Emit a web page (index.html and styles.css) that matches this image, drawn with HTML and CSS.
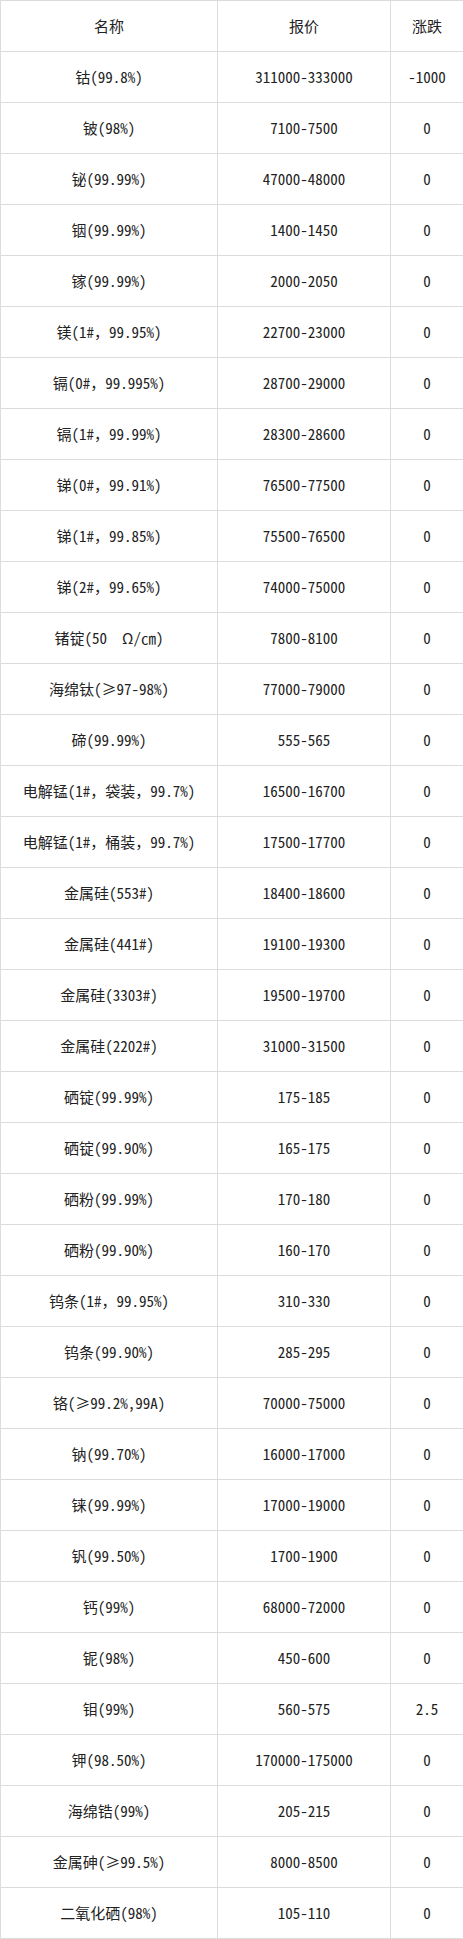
FILE: index.html
```html
<!DOCTYPE html>
<html lang="zh-CN">
<head>
<meta charset="utf-8">
<title>小金属报价</title>
<link rel="stylesheet" href="styles.css">
</head>
<body>
<table class="price-table">
<colgroup><col class="c-name"><col class="c-price"><col class="c-change"></colgroup>
<thead>
<tr><th>名称</th><th>报价</th><th>涨跌</th></tr>
</thead>
<tbody>
<tr><td>钴(99.8%)</td><td>311000-333000</td><td>-1000</td></tr>
<tr><td>铍(98%)</td><td>7100-7500</td><td>0</td></tr>
<tr><td>铋(99.99%)</td><td>47000-48000</td><td>0</td></tr>
<tr><td>铟(99.99%)</td><td>1400-1450</td><td>0</td></tr>
<tr><td>镓(99.99%)</td><td>2000-2050</td><td>0</td></tr>
<tr><td>镁(1#，99.95%)</td><td>22700-23000</td><td>0</td></tr>
<tr><td>镉(0#，99.995%)</td><td>28700-29000</td><td>0</td></tr>
<tr><td>镉(1#，99.99%)</td><td>28300-28600</td><td>0</td></tr>
<tr><td>锑(0#，99.91%)</td><td>76500-77500</td><td>0</td></tr>
<tr><td>锑(1#，99.85%)</td><td>75500-76500</td><td>0</td></tr>
<tr><td>锑(2#，99.65%)</td><td>74000-75000</td><td>0</td></tr>
<tr><td class="pre">锗锭(50　Ω/㎝)</td><td>7800-8100</td><td>0</td></tr>
<tr><td>海绵钛(≥97-98%)</td><td>77000-79000</td><td>0</td></tr>
<tr><td>碲(99.99%)</td><td>555-565</td><td>0</td></tr>
<tr><td>电解锰(1#，袋装，99.7%)</td><td>16500-16700</td><td>0</td></tr>
<tr><td>电解锰(1#，桶装，99.7%)</td><td>17500-17700</td><td>0</td></tr>
<tr><td>金属硅(553#)</td><td>18400-18600</td><td>0</td></tr>
<tr><td>金属硅(441#)</td><td>19100-19300</td><td>0</td></tr>
<tr><td>金属硅(3303#)</td><td>19500-19700</td><td>0</td></tr>
<tr><td>金属硅(2202#)</td><td>31000-31500</td><td>0</td></tr>
<tr><td>硒锭(99.99%)</td><td>175-185</td><td>0</td></tr>
<tr><td>硒锭(99.90%)</td><td>165-175</td><td>0</td></tr>
<tr><td>硒粉(99.99%)</td><td>170-180</td><td>0</td></tr>
<tr><td>硒粉(99.90%)</td><td>160-170</td><td>0</td></tr>
<tr><td>钨条(1#，99.95%)</td><td>310-330</td><td>0</td></tr>
<tr><td>钨条(99.90%)</td><td>285-295</td><td>0</td></tr>
<tr><td>铬(≥99.2%,99A)</td><td>70000-75000</td><td>0</td></tr>
<tr><td>钠(99.70%)</td><td>16000-17000</td><td>0</td></tr>
<tr><td>铼(99.99%)</td><td>17000-19000</td><td>0</td></tr>
<tr><td>钒(99.50%)</td><td>1700-1900</td><td>0</td></tr>
<tr><td>钙(99%)</td><td>68000-72000</td><td>0</td></tr>
<tr><td>铌(98%)</td><td>450-600</td><td>0</td></tr>
<tr><td>钼(99%)</td><td>560-575</td><td>2.5</td></tr>
<tr><td>钾(98.50%)</td><td>170000-175000</td><td>0</td></tr>
<tr><td>海绵锆(99%)</td><td>205-215</td><td>0</td></tr>
<tr><td>金属砷(≥99.5%)</td><td>8000-8500</td><td>0</td></tr>
<tr><td>二氧化硒(98%)</td><td>105-110</td><td>0</td></tr>
</tbody>
</table>
</body>
</html>
```
FILE: styles.css
```css
html, body {
  margin: 0;
  padding: 0;
  background: #fff;
}
.price-table {
  border-collapse: collapse;
  table-layout: fixed;
  width: 463px;
  font-family: "Noto Sans Mono CJK SC", "Noto Sans CJK SC", "Liberation Mono", monospace;
  font-size: 15px;
  color: #222;
}
.c-name { width: 217px; }
.c-price { width: 173px; }
.c-change { width: 73px; }
.price-table th,
.price-table td {
  border: 1px solid #dcdcdc;
  height: 50px;
  padding: 0;
  text-align: center;
  vertical-align: middle;
  font-weight: normal;
  white-space: nowrap;
  line-height: 20px;
}
.price-table td.pre {
  white-space: pre;
}
```
